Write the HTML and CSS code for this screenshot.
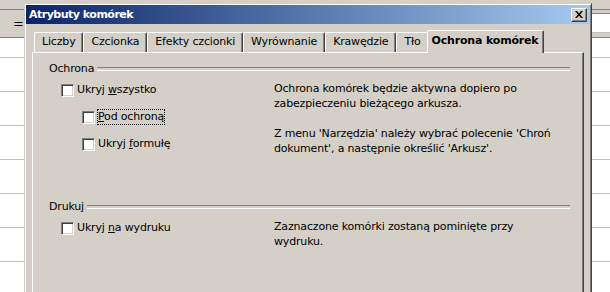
FILE: index.html
```html
<!DOCTYPE html>
<html lang="pl">

<head>
  <meta charset="UTF-8" />
  <title>Atrybuty komórek</title>
  <link rel="stylesheet" href="styles.css">
</head>

<body>
  <div class="screen">
    <div class="sheet">
      <div class="formula"><span class="eq">=</span></div>
      <div class="rows"></div>
    </div>

    <div class="dialog">
      <div class="titlebar">
        <span class="title">Atrybuty komórek</span>
        <span class="close">
          <svg width="8" height="7" viewBox="0 0 8 7"><path d="M0 0h2l2 2.5L6 0h2L5 3.5 8 7H6L4 4.5 2 7H0l3-3.5z" fill="#000"/></svg>
        </span>
      </div>

      <div class="tabs">
        <div class="tab">Liczby</div>
        <div class="tab">Czcionka</div>
        <div class="tab">Efekty czcionki</div>
        <div class="tab">Wyrównanie</div>
        <div class="tab">Krawędzie</div>
        <div class="tab">Tło</div>
        <div class="tab active">Ochrona komórek</div>
      </div>

      <div class="panel">
        <section class="group">
          <div class="group-title">Ochrona</div>
          <div class="group-body">
            <div class="options">
              <label class="check"><span class="box"></span><span class="text">Ukryj <u>w</u>szystko</span></label>
              <label class="check sub"><span class="box"></span><span class="text focus"><u>P</u>od ochroną</span></label>
              <label class="check sub"><span class="box"></span><span class="text">Ukryj <u>f</u>ormułę</span></label>
            </div>
            <div class="notes">
              <p>Ochrona komórek będzie aktywna dopiero po<br>zabezpieczeniu bieżącego arkusza.</p>
              <p>Z menu 'Narzędzia' należy wybrać polecenie 'Chroń<br>dokument', a następnie określić 'Arkusz'.</p>
            </div>
          </div>
        </section>

        <section class="group print">
          <div class="group-title">Drukuj</div>
          <div class="group-body">
            <div class="options">
              <label class="check"><span class="box"></span><span class="text">Ukryj <u>n</u>a wydruku</span></label>
            </div>
            <div class="notes">
              <p>Zaznaczone komórki zostaną pominięte przy<br>wydruku.</p>
            </div>
          </div>
        </section>
      </div>
    </div>

    <div class="sheet right">
      <div class="formula"><span class="input"></span></div>
      <div class="rows"></div>
    </div>
  </div>
</body>

</html>
```

FILE: styles.css
```css
* {
  box-sizing: border-box;
  margin: 0;
  padding: 0;
}

body {
  font-family: 'DejaVu Sans', sans-serif;
  font-size: 11px;
  letter-spacing: -0.17px;
  color: #000;
  background: #fff;
}

.screen {
  display: flex;
  width: 610px;
  height: 292px;
  overflow: hidden;
  background: #d4d0c8;
}

/* spreadsheet visible behind the dialog */
.sheet {
  width: 24px;
  flex: none;
  display: flex;
  flex-direction: column;
}

.sheet.right {
  width: 18px;
}

.formula {
  height: 29px;
  margin-top: 9px;
  border-top: 1px solid #808080;
  border-bottom: 1px solid #808080;
  display: flex;
  align-items: center;
}

.eq {
  margin-left: 13px;
  font-size: 13px;
  line-height: 1;
}

.input {
  display: block;
  width: 100%;
  height: 20px;
  margin-top: -2px;
  background: #fff;
  border-top: 1px solid #808080;
  border-bottom: 1px solid #c0c0c0;
}

.rows {
  flex: 1;
  background: #fff repeating-linear-gradient(to bottom, transparent 0 33px, #c0c0c0 33px 34px);
  background-position: 0 -14px;
}

/* dialog window */
.dialog {
  width: 568px;
  flex: none;
  margin-top: 3px;
  padding: 1px 1px 0 1px;
  background: #d4d0c8;
  border-top: 1px solid #d4d0c8;
  border-left: 1px solid #d4d0c8;
  border-right: 1px solid #404040;
  box-shadow: inset 1px 1px #fff, inset -1px 0 #808080;
}

.titlebar {
  height: 19px;
  padding: 0 3px;
  display: flex;
  align-items: center;
  justify-content: space-between;
  background: linear-gradient(to right, #0a246a, #a6caf0);
}

.title {
  color: #fff;
  font-weight: bold;
  letter-spacing: -0.5px;
}

.close {
  width: 16px;
  height: 14px;
  display: flex;
  align-items: center;
  justify-content: center;
  background: #d4d0c8;
  border: 1px solid;
  border-color: #fff #404040 #404040 #fff;
  box-shadow: inset -1px -1px #808080;
}

.tabs {
  height: 22px;
  margin-top: 6px;
  padding: 0 6px;
  display: flex;
  align-items: flex-end;
}

.tab {
  height: 20px;
  padding: 0 7px;
  margin-left: 2px;
  line-height: 18px;
  border: 1px solid;
  border-bottom: none;
  border-color: #fff #404040 transparent #fff;
  border-radius: 2px 2px 0 0;
  box-shadow: inset -1px 0 #808080;
}

.tab + .tab {
  margin-left: 0;
}

.tab.active {
  height: 23px;
  margin: 0 -2px -1px;
  padding: 0 4px;
  line-height: 20px;
  font-weight: bold;
  background: #d4d0c8;
  position: relative;
  z-index: 1;
}

.panel {
  height: 260px;
  margin: 0 6px;
  padding: 9px 13px 0 16px;
  border: 1px solid;
  border-color: #fff #404040 #404040 #fff;
  box-shadow: inset -1px -1px #808080;
}

.group-title {
  display: flex;
  align-items: center;
  line-height: 14px;
}

.group-title::after {
  content: "";
  flex: 1;
  height: 2px;
  margin-left: 3px;
  border-top: 1px solid #808080;
  border-bottom: 1px solid #fff;
}

.group-body {
  display: grid;
  grid-template-columns: 213px 1fr;
  margin-top: 6px;
  padding-left: 12px;
}

.options {
  display: flex;
  flex-direction: column;
  gap: 11px;
}

.check {
  display: flex;
  align-items: center;
  gap: 2px;
  height: 16px;
}

.check.sub {
  padding-left: 21px;
}

.box {
  width: 13px;
  height: 13px;
  background: #fff;
  border: 1px solid;
  border-color: #808080 #fff #fff #808080;
  box-shadow: inset 1px 1px #404040, inset -1px -1px #d4d0c8;
}

.text {
  line-height: 14px;
  border: 1px dotted transparent;
}

.text.focus {
  border-color: #000;
}

.notes p {
  line-height: 14.5px;
  margin-bottom: 16px;
}

.group.print {
  margin-top: 28px;
}
```
